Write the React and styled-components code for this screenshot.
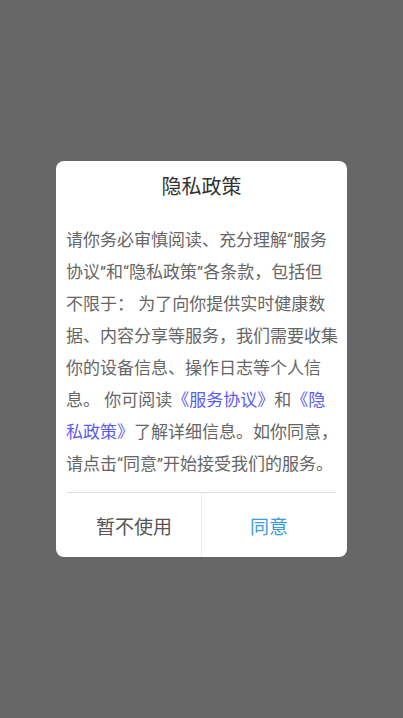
import React from "react";
import styled, { createGlobalStyle } from "styled-components";

const font = `"Roboto", "Noto Sans CJK SC", sans-serif`;

const GlobalStyle = createGlobalStyle`
  html, body {
    margin: 0;
    padding: 0;
    height: 100%;
  }
  body {
    font-family: ${font};
    background-color: #666666;
  }
  #root {
    height: 100%;
  }
`;

const Overlay = styled.div`
  width: 100%;
  height: 100vh;
  background-color: #666666;
  display: flex;
  justify-content: center;
  align-items: center;
`;

const Dialog = styled.div`
  width: 291px;
  background-color: #ffffff;
  border-radius: 8px;
  display: flex;
  flex-direction: column;
  overflow: hidden;
`;

const Title = styled.h2`
  margin: 0;
  padding-top: 12px;
  line-height: 28px;
  font-size: 20px;
  font-weight: 400;
  color: #333333;
  text-align: center;
  font-family: ${font};
`;

const Body = styled.p`
  margin: 23px 0 12px;
  padding: 0 8px 0 10px;
  font-size: 17px;
  line-height: 32px;
  color: #666666;
  font-family: ${font};
`;

const Link = styled.span`
  color: #5b5bf5;
`;

const Footer = styled.div`
  margin: 0 11px;
  height: 64px;
  border-top: 1px solid #dddddd;
  display: flex;
`;

const Button = styled.button`
  flex: 1;
  border: none;
  background: transparent;
  padding: 0;
  font-family: ${font};
  font-size: 19px;
  color: ${(p) => (p.$primary ? "#3d9be0" : "#555555")};
  border-left: ${(p) => (p.$primary ? "1px solid #eeeeee" : "none")};
  cursor: pointer;
`;

const App = () => {
  return (
    <>
      <GlobalStyle />
      <Overlay>
        <Dialog>
          <Title>隐私政策</Title>
          <Body>
            请你务必审慎阅读、充分理解“服务协议”和“隐私政策”各条款，包括但不限于：
            为了向你提供实时健康数据、内容分享等服务，我们需要收集你的设备信息、操作日志等个人信息。
            你可阅读<Link>《服务协议》</Link>和<Link>《隐私政策》</Link>了解详细信息。如你同意，请点击“同意”开始接受我们的服务。
          </Body>
          <Footer>
            <Button>暂不使用</Button>
            <Button $primary>同意</Button>
          </Footer>
        </Dialog>
      </Overlay>
    </>
  );
};

export default App;
